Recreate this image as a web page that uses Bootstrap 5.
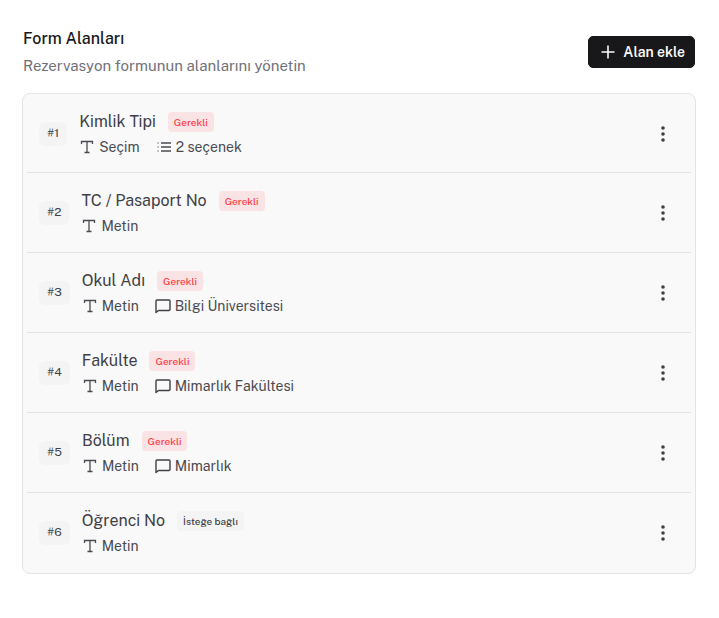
<!DOCTYPE html>
<html lang="tr">
<head>
<meta charset="utf-8">
<meta name="viewport" content="width=device-width, initial-scale=1">
<title>Form Alanları</title>
<link href="https://cdn.jsdelivr.net/npm/bootstrap@5.3.0/dist/css/bootstrap.min.css" rel="stylesheet">
<style>
body { font-family: "Public Sans", Inter, "Liberation Sans", sans-serif; color: #3f3f46; background: #fff; }
.page { padding: 25px 23px 24px 22px; }
.page-head { padding: 0 1px; margin-bottom: 15px; }
.page-title { font-size: 16px; line-height: 28px; font-weight: 500; color: #18181b; }
.page-note { font-size: 15px; line-height: 25px; color: #71717a; }
.btn-add { --bs-btn-color: #fafafa; --bs-btn-bg: #18181b; --bs-btn-border-color: #18181b; --bs-btn-hover-color: #fff; --bs-btn-hover-bg: #27272a; height: 32px; padding: 0 9px; gap: 5px; font-size: 14px; line-height: 30px; font-weight: 600; border-radius: 5px; }
.field-list { background: #f9f9f9; border: 1px solid #e4e4e7; border-radius: 8px; padding: 0 4px; }
.field-row { padding: 14px 16px 14px 12px; }
.field-row:first-child { padding-bottom: 13px; }
.field-row:last-child { padding-bottom: 15px; }
.field-row + .field-row { border-top: 1px solid #e4e4e7; }
.field-text { padding-top: 2px; margin-left: 12px; }
.order { font-size: 12px; line-height: 22px; padding: 0 8px 2px; border-radius: 6px; background: #f4f4f5; }
.field-head { gap: 12px; }
.field-name { font-size: 16px; line-height: 24px; }
.tag { font-size: 10px; line-height: 20px; font-weight: 500; padding: 0 6px; border-radius: 4px; background: #f4f4f5; }
.tag-required { color: #ff3b47; background: #fae3e4; }
.field-meta { font-size: 14px; line-height: 24px; gap: 16px; margin-top: 1px; color: #4a4a52; }
.btn-more { width: 24px; height: 24px; color: #3f3f46; }
</style>
<script src="https://cdn.jsdelivr.net/npm/bootstrap@5.3.0/dist/js/bootstrap.bundle.min.js"></script>
</head>
<body>
<svg class="d-none" aria-hidden="true">
<symbol id="i-text" viewBox="0 0 16 16"><path d="M2.500 5V2.500h11V5M8 2.500v11M5.500 13.500h5" fill="none" stroke="currentColor" stroke-width="1.300"/></symbol>
<symbol id="i-list" viewBox="0 0 16 16"><path d="M5 4h10M5 8h10M5 12h10" stroke="currentColor" stroke-width="1.300"/><path d="M1.500 4h1.200M1.500 8h1.200M1.500 12h1.200" stroke="currentColor" stroke-width="1.200"/></symbol>
<symbol id="i-note" viewBox="0 0 16 16"><path d="M2 2h12q1 0 1 1v8.500q0 1-1 1H3.500L1 14.500V3q0-1 1-1z" fill="none" stroke="#3f3f46" stroke-width="1.400" stroke-linejoin="round"/></symbol>
<symbol id="i-more" viewBox="0 0 16 16"><circle cx="8" cy="2" r="1.800"/><circle cx="8" cy="8" r="1.800"/><circle cx="8" cy="14" r="1.800"/></symbol>
</svg>
<main class="page">
<header class="page-head d-flex justify-content-between align-items-center">
<div><h1 class="page-title mb-0">Form Alanları</h1><p class="page-note mb-0">Rezervasyon formunun alanlarını yönetin</p></div>
<button type="button" class="btn btn-add d-flex align-items-center"><svg width="20" height="20" viewBox="0 0 20 20" aria-hidden="true"><path d="M3.500 10h13M10 3.500v13" stroke="currentColor" stroke-width="1.600"/></svg>Alan ekle</button>
</header>
<ul class="field-list list-unstyled mb-0">
<li class="field-row d-flex align-items-center"><span class="order">#1</span><div class="field-text flex-grow-1"><div class="field-head d-flex align-items-center"><span class="field-name">Kimlik Tipi</span><span class="tag tag-required">Gerekli</span></div><div class="field-meta d-flex"><span class="d-flex align-items-center gap-1"><svg width="16" height="16"><use href="#i-text"/></svg>Seçim</span><span class="d-flex align-items-center gap-1"><svg width="16" height="16"><use href="#i-list"/></svg>2 seçenek</span></div></div><button type="button" class="btn-more btn p-0 border-0 d-flex align-items-center justify-content-center" aria-label="Seçenekler"><svg width="16" height="16" fill="currentColor"><use href="#i-more"/></svg></button></li>
<li class="field-row d-flex align-items-center"><span class="order">#2</span><div class="field-text flex-grow-1"><div class="field-head d-flex align-items-center"><span class="field-name">TC / Pasaport No</span><span class="tag tag-required">Gerekli</span></div><div class="field-meta d-flex"><span class="d-flex align-items-center gap-1"><svg width="16" height="16"><use href="#i-text"/></svg>Metin</span></div></div><button type="button" class="btn-more btn p-0 border-0 d-flex align-items-center justify-content-center" aria-label="Seçenekler"><svg width="16" height="16" fill="currentColor"><use href="#i-more"/></svg></button></li>
<li class="field-row d-flex align-items-center"><span class="order">#3</span><div class="field-text flex-grow-1"><div class="field-head d-flex align-items-center"><span class="field-name">Okul Adı</span><span class="tag tag-required">Gerekli</span></div><div class="field-meta d-flex"><span class="d-flex align-items-center gap-1"><svg width="16" height="16"><use href="#i-text"/></svg>Metin</span><span class="d-flex align-items-center gap-1"><svg width="16" height="16"><use href="#i-note"/></svg>Bilgi Üniversitesi</span></div></div><button type="button" class="btn-more btn p-0 border-0 d-flex align-items-center justify-content-center" aria-label="Seçenekler"><svg width="16" height="16" fill="currentColor"><use href="#i-more"/></svg></button></li>
<li class="field-row d-flex align-items-center"><span class="order">#4</span><div class="field-text flex-grow-1"><div class="field-head d-flex align-items-center"><span class="field-name">Fakülte</span><span class="tag tag-required">Gerekli</span></div><div class="field-meta d-flex"><span class="d-flex align-items-center gap-1"><svg width="16" height="16"><use href="#i-text"/></svg>Metin</span><span class="d-flex align-items-center gap-1"><svg width="16" height="16"><use href="#i-note"/></svg>Mimarlık Fakültesi</span></div></div><button type="button" class="btn-more btn p-0 border-0 d-flex align-items-center justify-content-center" aria-label="Seçenekler"><svg width="16" height="16" fill="currentColor"><use href="#i-more"/></svg></button></li>
<li class="field-row d-flex align-items-center"><span class="order">#5</span><div class="field-text flex-grow-1"><div class="field-head d-flex align-items-center"><span class="field-name">Bölüm</span><span class="tag tag-required">Gerekli</span></div><div class="field-meta d-flex"><span class="d-flex align-items-center gap-1"><svg width="16" height="16"><use href="#i-text"/></svg>Metin</span><span class="d-flex align-items-center gap-1"><svg width="16" height="16"><use href="#i-note"/></svg>Mimarlık</span></div></div><button type="button" class="btn-more btn p-0 border-0 d-flex align-items-center justify-content-center" aria-label="Seçenekler"><svg width="16" height="16" fill="currentColor"><use href="#i-more"/></svg></button></li>
<li class="field-row d-flex align-items-center"><span class="order">#6</span><div class="field-text flex-grow-1"><div class="field-head d-flex align-items-center"><span class="field-name">Öğrenci No</span><span class="tag">İsteğe bağlı</span></div><div class="field-meta d-flex"><span class="d-flex align-items-center gap-1"><svg width="16" height="16"><use href="#i-text"/></svg>Metin</span></div></div><button type="button" class="btn-more btn p-0 border-0 d-flex align-items-center justify-content-center" aria-label="Seçenekler"><svg width="16" height="16" fill="currentColor"><use href="#i-more"/></svg></button></li>
</ul>
</main>
</body>
</html>
